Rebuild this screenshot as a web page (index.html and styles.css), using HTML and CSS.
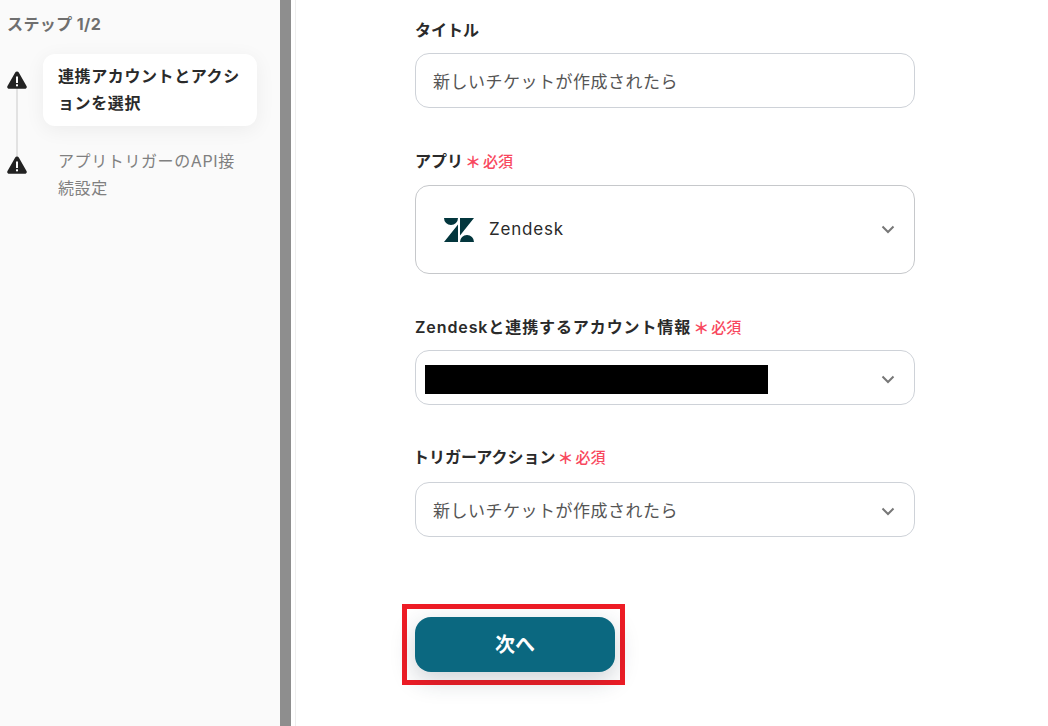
FILE: index.html
```html
<!DOCTYPE html>
<html lang="ja">
<head>
    <meta charset="UTF-8">
    <title>トリガー設定</title>
    <link rel="stylesheet" href="styles.css">
</head>
<body>
    <div class="layout">
        <aside class="sidebar">
            <div class="step-count">ステップ 1/2</div>
            <div class="steps">
                <div class="step step-active">
                    <svg class="warn" viewBox="0 0 20 18"><path d="M10 .5c-.8 0-1.400.4-1.800 1.100L.5 14.900c-.8 1.400.2 2.900 1.800 2.900h15.400c1.600 0 2.600-1.500 1.800-2.900L11.800 1.600C11.400.9 10.800.5 10 .5z" fill="#222"/><rect x="9" y="5.500" width="2" height="6.500" fill="#fff"/><rect x="9" y="13.300" width="2" height="2" fill="#fff"/></svg>
                    <div class="step-card">連携アカウントとアクションを選択</div>
                </div>
                <div class="step">
                    <svg class="warn" viewBox="0 0 20 18"><path d="M10 .5c-.8 0-1.400.4-1.800 1.100L.5 14.900c-.8 1.400.2 2.900 1.800 2.900h15.400c1.600 0 2.600-1.500 1.800-2.900L11.800 1.600C11.400.9 10.800.5 10 .5z" fill="#222"/><rect x="9" y="5.500" width="2" height="6.500" fill="#fff"/><rect x="9" y="13.300" width="2" height="2" fill="#fff"/></svg>
                    <div class="step-text">アプリトリガーのAPI接続設定</div>
                </div>
            </div>
        </aside>
        <div class="divider"></div>
        <main class="main">
            <div class="field field-title">
                <div class="label">タイトル</div>
                <div class="box">新しいチケットが作成されたら</div>
            </div>
            <div class="field field-app">
                <div class="label">アプリ<span class="star">＊</span><span class="req">必須</span></div>
                <div class="box box-app">
                    <svg class="zendesk" viewBox="0 0 30 24"><path d="M14 6.500V24H0zM14 0A7 7 0 0 1 0 0zM16 24a7 7 0 0 1 14 0zM16 17.500V0h14z" fill="#03363d"/></svg>
                    <span class="app-name">Zendesk</span>
                    <svg class="chev" viewBox="0 0 14 9"><path d="M1.500 1.500 7 7l5.500-5.500" fill="none" stroke="#777" stroke-width="2"/></svg>
                </div>
            </div>
            <div class="field field-account">
                <div class="label label-account">Zendeskと連携するアカウント情報<span class="star">＊</span><span class="req">必須</span></div>
                <div class="box box-account">
                    <div class="redacted"></div>
                    <svg class="chev" viewBox="0 0 14 9"><path d="M1.500 1.500 7 7l5.500-5.500" fill="none" stroke="#777" stroke-width="2"/></svg>
                </div>
            </div>
            <div class="field field-action">
                <div class="label label-action">トリガーアクション<span class="star">＊</span><span class="req">必須</span></div>
                <div class="box box-action">新しいチケットが作成されたら
                    <svg class="chev chev-low" viewBox="0 0 14 9"><path d="M1.500 1.500 7 7l5.500-5.500" fill="none" stroke="#777" stroke-width="2"/></svg>
                </div>
            </div>
            <div class="highlight">
                <button class="next" type="button">次へ</button>
            </div>
        </main>
    </div>
</body>
</html>
```

FILE: styles.css
```css
* {
    box-sizing: border-box;
}
html, body {
    height: 100%;
}
body {
    margin: 0;
    background-color: white;
    color: #2a2a2a;
    font-family: Inter, "Noto Sans CJK JP", sans-serif;
    overflow: hidden;
}
.layout {
    display: flex;
    height: 726px;
}
.sidebar {
    width: 280px;
    flex-shrink: 0;
    padding: 14px 23px 0 7px;
    background-color: #fafafa;
}
.step-count {
    font-size: 16px;
    line-height: 20px;
    font-weight: 700;
    color: #6f6f6f;
    letter-spacing: 0.4px;
}
.steps {
    position: relative;
    margin-top: 20px;
}
.steps::before {
    content: "";
    position: absolute;
    left: 9px;
    top: 34px;
    width: 2px;
    height: 72px;
    background-color: #e2e2e2;
}
.step {
    display: flex;
    align-items: flex-start;
}
.warn {
    position: relative;
    width: 20px;
    height: 18px;
    flex-shrink: 0;
    margin-top: 17px;
}
.step-card {
    margin-left: 16px;
    padding: 9px 14px 9px 15px;
    width: 214px;
    background-color: white;
    border-radius: 12px;
    box-shadow: 0 4px 20px rgba(0,0,0,0.06);
    font-size: 16px;
    line-height: 27px;
    font-weight: 600;
    letter-spacing: 0.6px;
}
.step-text {
    margin-left: 31px;
    margin-top: 10px;
    width: 190px;
    font-size: 16px;
    line-height: 27px;
    color: #808080;
    letter-spacing: 0.6px;
}
.step + .step {
    margin-top: 12px;
}
.step + .step .warn {
    margin-top: 18px;
}
.divider {
    width: 16px;
    flex-shrink: 0;
    background-color: white;
    border-left: 11px solid #8e8e8e;
    border-right: 1px solid #eeeeee;
}
.main {
    flex: 1;
    padding: 0 0 0 119px;
}
.field {
    width: 500px;
}
.field-title {
    padding-top: 19px;
}
.field-app, .field-account {
    margin-top: 42px;
}
.field-action {
    margin-top: 41px;
}
.label {
    display: flex;
    align-items: center;
    height: 20px;
    font-size: 16px;
    font-weight: 600;
    color: #2a2a2a;
}
.label-account {
    letter-spacing: 0.9px;
}
.label-action {
    margin-left: -2px;
}
.star {
    margin-left: 2px;
    width: 16px;
    text-align: center;
    font-size: 16px;
    line-height: 20px;
    font-weight: 700;
    padding-top: 3px;
    letter-spacing: 0;
    color: #f8485e;
}
.req {
    margin-left: 2px;
    font-size: 15px;
    font-weight: 500;
    letter-spacing: 0;
    color: #f8485e;
}
.box {
    position: relative;
    display: flex;
    align-items: center;
    height: 55px;
    margin-top: 14px;
    padding: 0 17px;
    background-color: white;
    border: 1px solid #ced2d8;
    border-radius: 14px;
    font-size: 17px;
    color: #555;
    letter-spacing: 0.5px;
}
.box-app {
    height: 89px;
    margin-top: 15px;
    padding-left: 28px;
    border-color: #c6c8cb;
}
.box-account {
    padding-left: 9px;
    padding-top: 4px;
}
.box-action {
    margin-top: 16px;
}
.zendesk {
    width: 30px;
    height: 24px;
}
.app-name {
    margin-left: 15px;
    padding-bottom: 2px;
    font-size: 17px;
    letter-spacing: 0.8px;
    color: #2a2a2a;
}
.redacted {
    width: 343px;
    height: 29px;
    background-color: black;
}
.chev {
    width: 14px;
    height: 9px;
    margin-left: auto;
    margin-right: 2px;
}
.chev-low {
    margin-top: 3px;
}
.highlight {
    width: 223px;
    height: 81px;
    margin-top: 67px;
    margin-left: -13px;
    padding: 8px 5px 8px 8px;
    border: 5px solid #ee1c25;
}
.next {
    display: block;
    width: 200px;
    height: 55px;
    padding: 0 0 3px;
    background-color: #0b6880;
    color: white;
    border: none;
    border-radius: 16px;
    box-shadow: 0 8px 24px rgba(30,50,70,0.22);
    font-family: inherit;
    font-size: 20px;
    font-weight: 700;
    cursor: pointer;
}
```
